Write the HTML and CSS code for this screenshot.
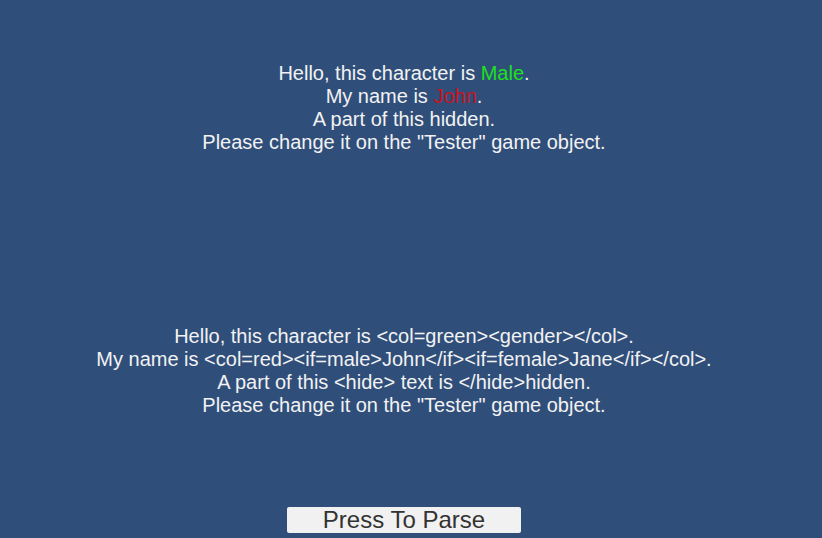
FILE: index.html
```html
<!DOCTYPE html>
<html>
<head>
<meta charset="utf-8">
<link rel="stylesheet" href="styles.css">
</head>
<body>
<div class="stage">
  <div class="text parsed">
    <div>Hello, this character is <span class="green">Male</span>.</div>
    <div>My name is <span class="red">John</span>.</div>
    <div>A part of this hidden.</div>
    <div>Please change it on the "Tester" game object.</div>
  </div>
  <div class="text source">
    <div>Hello, this character is &lt;col=green&gt;&lt;gender&gt;&lt;/col&gt;.</div>
    <div>My name is &lt;col=red&gt;&lt;if=male&gt;John&lt;/if&gt;&lt;if=female&gt;Jane&lt;/if&gt;&lt;/col&gt;.</div>
    <div>A part of this &lt;hide&gt; text is &lt;/hide&gt;hidden.</div>
    <div>Please change it on the "Tester" game object.</div>
  </div>
  <button class="parse-btn">Press To Parse</button>
</div>
</body>
</html>
```

FILE: styles.css
```css
html, body {
  margin: 0;
  padding: 0;
  height: 100%;
  background: #304e7a;
  overflow: hidden;
}
.stage {
  width: 808px;
  height: 538px;
  display: flex;
  flex-direction: column;
  align-items: center;
  padding-top: 62px;
  box-sizing: border-box;
  font-family: "Liberation Sans", Arial, sans-serif;
}
.text {
  color: #f2f2f2;
  font-size: 20px;
  line-height: 23px;
  text-align: center;
}
.source {
  margin-top: 171px;
}
.green { color: #1ee01e; }
.red { color: #c8141e; }
.parse-btn {
  margin-top: 90px;
  width: 234px;
  height: 26px;
  background: #f1f1f1;
  border: none;
  border-radius: 2px;
  color: #333;
  font-family: "Liberation Sans", Arial, sans-serif;
  font-size: 24px;
  line-height: 26px;
  padding: 0;
}
```
